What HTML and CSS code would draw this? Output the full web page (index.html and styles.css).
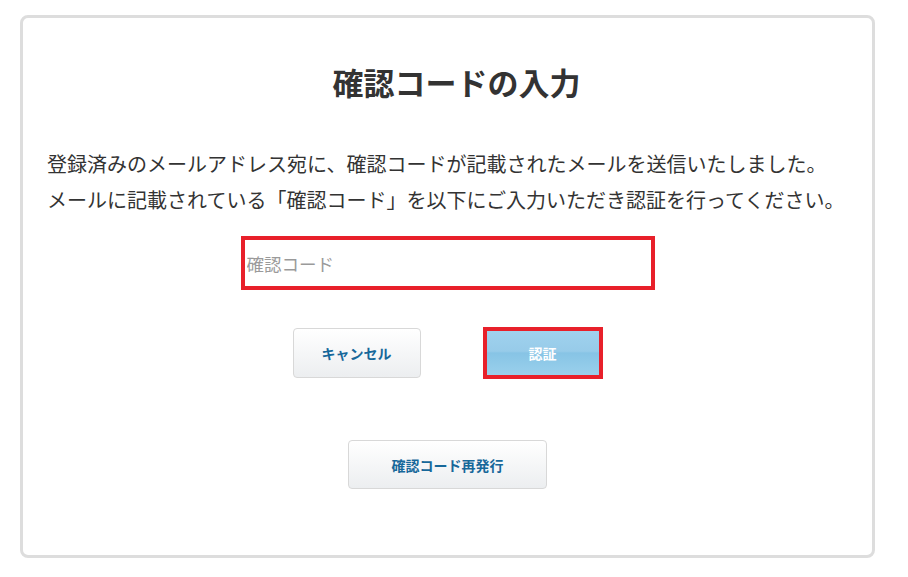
FILE: index.html
```html
<!DOCTYPE html>
<html lang="ja">
<head>
    <meta charset="UTF-8">
    <meta name="viewport" content="width=device-width, initial-scale=1.0">
    <title>確認コードの入力</title>
    <link rel="stylesheet" href="styles.css">
</head>
<body>
    <div class="card">
        <h1 class="title">確認コードの入力</h1>
        <p class="message">登録済みのメールアドレス宛に、確認コードが記載されたメールを送信いたしました。<br>メールに記載されている「確認コード」を以下にご入力いただき認証を行ってください。</p>
        <input class="code-input" type="text" placeholder="確認コード">
        <div class="actions">
            <button class="btn btn-cancel">キャンセル</button>
            <button class="btn btn-verify">認証</button>
        </div>
        <button class="btn btn-resend">確認コード再発行</button>
    </div>
</body>
</html>
```

FILE: styles.css
```css
/* Page */
body {
    margin: 0;
    background-color: #ffffff;
    font-family: "Noto Sans CJK JP", "Noto Sans", sans-serif;
    color: #333333;
}
/* Main card */
.card {
    box-sizing: border-box;
    width: 855px;
    height: 543px;
    margin: 15px 0 0 20px;
    padding-top: 43px;
    border: 3px solid #dddddd;
    border-radius: 8px;
    display: flex;
    flex-direction: column;
    align-items: center;
}
/* Heading */
.title {
    margin: 0;
    padding-left: 18px;
    font-size: 31px;
    line-height: 41px;
    font-weight: 700;
    color: #333333;
}
/* Explanation text */
.message {
    align-self: stretch;
    margin: 44px 0 0;
    padding: 0 24px;
    font-size: 20px;
    line-height: 36px;
    white-space: nowrap;
}
/* Code input */
.code-input {
    box-sizing: border-box;
    width: 414px;
    height: 54px;
    margin-top: 18px;
    padding: 0 2px;
    border: 4px solid #e8202a;
    outline: none;
    font-family: "Noto Sans CJK JP", sans-serif;
    font-size: 17.5px;
    color: #333333;
}
.code-input::placeholder {
    color: #9a9a9a;
}
/* Button row */
.actions {
    display: flex;
    align-items: center;
    gap: 62px;
    margin-top: 37px;
}
/* Buttons */
.btn {
    box-sizing: border-box;
    padding: 0;
    font-family: "Noto Sans CJK JP", sans-serif;
    font-size: 14px;
    font-weight: 700;
    cursor: pointer;
}
.btn-cancel,
.btn-resend {
    height: 50px;
    border: 1px solid #d8d8d8;
    border-radius: 4px;
    background: linear-gradient(#ffffff, #eceef0);
    color: #17689a;
}
.btn-cancel {
    width: 128px;
}
.btn-verify {
    width: 120px;
    height: 52px;
    border: 4px solid #e8202a;
    background: linear-gradient(#a0d2ee 0%, #97cbe9 46%, #87c4e5 50%, #9ad0ec 100%);
    color: #ffffff;
}
.btn-resend {
    width: 199px;
    height: 49px;
    margin-top: 61px;
}
```
